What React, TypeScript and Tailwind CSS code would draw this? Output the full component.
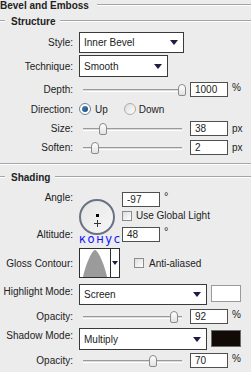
type SliderProps = {
  pct: number;
};

const Arrow = () => (
  <svg width="8" height="5" viewBox="0 0 8 5" className="shrink-0">
    <path d="M0 0 H8 L4 5 Z" fill="#1c1c44" />
  </svg>
);

const Label = ({ text }: { text: string }) => (
  <div className="w-[73px] shrink-0 text-right whitespace-nowrap">{text}</div>
);

const Slider: React.FC<SliderProps> = ({ pct }) => (
  <div className="relative w-[107px] h-[14px] shrink-0">
    <div className="absolute left-[4px] right-[4px] top-[6px] h-[3px] border-t border-[#9a9a9a] border-b border-b-white bg-[#dadada]" />
    <div className="absolute left-[4px] right-[4px] top-0 h-full">
      <div
        className="absolute top-[1px] w-[8px] h-[12px] -translate-x-1/2 rounded-t-[4px] rounded-b-[2px] border border-[#8a8a8a] bg-gradient-to-b from-white to-[#e2e2e2]"
        style={{ left: `${pct}%` }}
      />
    </div>
  </div>
);

const NumBox = ({ value }: { value: string }) => (
  <div className="w-[38px] h-[15px] shrink-0 border border-[#4f4f4f] bg-white pl-[4px] leading-[13px]">
    {value}
  </div>
);

const Select = ({ value, width }: { value: string; width: string }) => (
  <div
    className={`${width} h-full shrink-0 border border-[#3a3a3a] bg-white flex items-center justify-between pl-[4px] pr-[5px]`}
  >
    <span>{value}</span>
    <Arrow />
  </div>
);

const SliderRow = ({
  label,
  pct,
  value,
  unit,
  className,
}: {
  label: string;
  pct: number;
  value: string;
  unit: string;
  className: string;
}) => (
  <div className={`flex items-center h-[15px] ${className}`}>
    <Label text={label} />
    <div className="ml-[6px]">
      <Slider pct={pct} />
    </div>
    <div className="ml-[4px]">
      <NumBox value={value} />
    </div>
    <span className={`ml-[4px] ${unit === "%" ? "-mt-[4px]" : ""}`}>{unit}</span>
  </div>
);

const Checkbox = () => (
  <div className="w-[10px] h-[10px] shrink-0 border border-[#8c8c8c] bg-gradient-to-br from-[#dedede] to-white" />
);

export default function App() {
  return (
    <div className="w-[251px] h-[372px] overflow-hidden bg-[#ececec] text-[10px] text-[#222] font-['Liberation_Sans',Arial,sans-serif]">
      {/* header */}
      <div className="flex items-center h-[10px]">
        <span className="font-bold whitespace-nowrap">Bevel and Emboss</span>
        <div className="ml-[8px] flex-1 border-t border-[#a5a5a5] border-b border-b-white" />
      </div>

      <div className="mt-[6px] flex items-center h-[10px]">
        <div className="w-[5px] border-t border-[#a5a5a5] border-b border-b-white" />
        <span className="ml-[6px] font-bold">Structure</span>
        <div className="ml-[5px] flex-1 border-t border-[#a5a5a5] border-b border-b-white" />
      </div>

      <div className="mt-[6px] flex items-center h-[21px]">
        <Label text="Style:" />
        <div className="ml-[6px] h-full">
          <Select value="Inner Bevel" width="w-[105px]" />
        </div>
      </div>

      <div className="mt-[2px] flex items-center h-[22px]">
        <Label text="Technique:" />
        <div className="ml-[6px] h-full">
          <Select value="Smooth" width="w-[89px]" />
        </div>
      </div>

      <SliderRow label="Depth:" pct={100} value="1000" unit="%" className="mt-[5px]" />

      <div className="mt-[5px] flex items-center h-[14px]">
        <Label text="Direction:" />
        <div className="ml-[6px] w-[12px] h-[12px] rounded-full border border-[#6f8193] bg-white flex items-center justify-center">
          <div className="w-[6px] h-[6px] rounded-full bg-gradient-to-br from-[#4a8cc0] to-[#13466f]" />
        </div>
        <span className="ml-[4px]">Up</span>
        <div className="ml-[16px] w-[12px] h-[12px] rounded-full border border-[#adadad] bg-gradient-to-br from-[#dcdcdc] to-white" />
        <span className="ml-[3px]">Down</span>
      </div>

      <SliderRow label="Size:" pct={20} value="38" unit="px" className="mt-[5px]" />
      <SliderRow label="Soften:" pct={12} value="2" unit="px" className="mt-[4px]" />

      <div className="mt-[8px] border-t border-[#a8a8a8] border-b border-b-white" />

      <div className="mt-[7px] flex items-center h-[10px]">
        <div className="w-[5px] border-t border-[#a5a5a5] border-b border-b-white" />
        <span className="ml-[6px] font-bold">Shading</span>
        <div className="ml-[5px] flex-1 border-t border-[#a5a5a5] border-b border-b-white" />
      </div>

      {/* angle / altitude */}
      <div className="relative mt-[10px] flex">
        <div className="w-[73px] shrink-0 text-right">
          <div className="h-[15px] leading-[12px]">Angle:</div>
          <div className="mt-[20px] h-[15px] leading-[15px]">Altitude:</div>
        </div>
        <div className="ml-[6px] w-[43px] shrink-0 pt-[7px]">
          <div className="relative w-[36px] h-[36px] rounded-full border-2 border-[#6a7384] bg-gradient-to-br from-[#e4e4e4] to-[#f8f8f8]">
            <div className="absolute left-[15px] top-[13px] w-[3px] h-[3px] bg-black" />
            <svg
              width="7"
              height="7"
              viewBox="0 0 7 7"
              className="absolute left-[13px] top-[19px]"
            >
              <path d="M3.5 0 V7 M0 3.5 H7" stroke="#333" strokeWidth="1" />
            </svg>
          </div>
        </div>
        <span className="absolute left-[79px] top-[42px] text-[11.5px] tracking-[1.6px] leading-none text-[#1010ff] font-['DejaVu_Sans',sans-serif]">
          конус
        </span>
        <div className="relative z-10">
          <div className="flex items-start">
            <NumBox value="-97" />
            <span className="ml-[4px] -mt-[4px] text-[11px]">°</span>
          </div>
          <div className="mt-[3px] flex items-center h-[11px]">
            <Checkbox />
            <span className="ml-[4px] whitespace-nowrap">Use Global Light</span>
          </div>
          <div className="mt-[6px] flex items-start">
            <NumBox value="48" />
            <span className="ml-[4px] -mt-[4px] text-[11px]">°</span>
          </div>
        </div>
      </div>

      <div className="mt-[6px] flex items-center h-[30px]">
        <Label text="Gloss Contour:" />
        <div className="ml-[6px] w-[41px] h-full border border-[#2e2e2e] bg-white flex">
          <svg width="30" height="28" viewBox="0 0 30 28" className="shrink-0">
            <path
              d="M3 28 C5 18 11 2 15 1 C19 2 25 18 27 28 Z"
              fill="#9b9b9b"
            />
          </svg>
          <div className="flex-1 border-l border-[#2e2e2e] flex items-center justify-center">
            <svg width="6" height="4" viewBox="0 0 6 4">
              <path d="M0 0 H6 L3 4 Z" fill="#1c1c44" />
            </svg>
          </div>
        </div>
        <div className="ml-[14px]">
          <Checkbox />
        </div>
        <span className="ml-[5px]">Anti-aliased</span>
      </div>

      <div className="mt-[6px] flex items-start h-[21px]">
        <Label text="Highlight Mode:" />
        <div className="ml-[6px] h-full">
          <Select value="Screen" width="w-[128px]" />
        </div>
        <div className="ml-[4px] mt-[1px] w-[30px] h-[17px] border border-[#9a9a9a] bg-white" />
      </div>

      <SliderRow label="Opacity:" pct={92} value="92" unit="%" className="mt-[4px]" />

      <div className="mt-[4px] flex items-start h-[22px]">
        <Label text="Shadow Mode:" />
        <div className="ml-[6px] h-full">
          <Select value="Multiply" width="w-[128px]" />
        </div>
        <div className="ml-[4px] mt-[2px] w-[30px] h-[17px] border border-[#6a6a6a] bg-[#120a06]" />
      </div>

      <SliderRow label="Opacity:" pct={71} value="70" unit="%" className="mt-[3px]" />
    </div>
  );
}
